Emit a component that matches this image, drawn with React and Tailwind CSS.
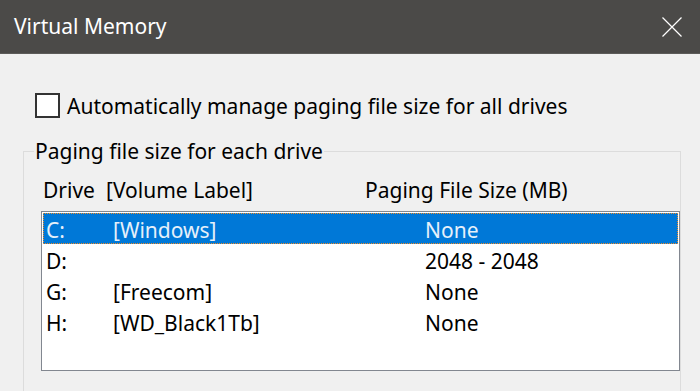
import React from 'react';

const drives = [
    { letter: 'C:', label: '[Windows]', size: 'None', selected: true },
    { letter: 'D:', label: '', size: '2048 - 2048' },
    { letter: 'G:', label: '[Freecom]', size: 'None' },
    { letter: 'H:', label: '[WD_Black1Tb]', size: 'None' },
];

export default function App() {
    return (
        <div
            className="w-[700px] h-[391px] overflow-hidden bg-[#f0f0f0] text-[#000]"
            style={{ fontFamily: '"Noto Sans", "Open Sans", sans-serif' }}
        >
            {/* Title bar */}
            <div className="h-[54px] bg-[#4b4a48] border-b border-[#5c5b59] flex items-center justify-between pl-[14px] pr-[18px]">
                <span className="text-white text-[21px]">Virtual Memory</span>
                <svg width="20" height="20" viewBox="0 0 20 20" className="mt-[1px]">
                    <path d="M0.5 0.5 L19.5 19.5 M19.5 0.5 L0.5 19.5" stroke="#ffffff" strokeWidth="1.2" fill="none" />
                </svg>
            </div>

            <div className="pl-[23px] pr-[19px] pt-[38px]">
                {/* Auto manage checkbox */}
                <label className="flex items-center gap-[7px] ml-[12px]">
                    <span className="w-[25px] h-[25px] border-2 border-[#333333] bg-white shrink-0" />
                    <span className="text-[21px] leading-[25px] mt-[2px]">Automatically manage paging file size for all drives</span>
                </label>

                {/* Group box */}
                <fieldset className="mt-[18px] border border-[#dcdcdc] pl-[10px] pr-0 pb-[30px] h-[300px]">
                    <legend className="px-[1px] text-[21px] leading-[28px]">Paging file size for each drive</legend>

                    <div className="flex text-[21px] leading-[26px] mt-[12px] pl-[9px]">
                        <span className="w-[63px]">Drive</span>
                        <span className="w-[259px]">[Volume Label]</span>
                        <span>Paging File Size (MB)</span>
                    </div>

                    <div className="mt-[8px] ml-[7px] h-[160px] border border-[#828790] bg-white p-[1px]">
                        {drives.map((d) => (
                            <div
                                key={d.letter}
                                className={`flex items-center h-[31px] text-[21px] leading-[31px] pl-[3px] pt-[3px] ${d.selected
                                    ? 'bg-[#0078d7] text-[#e6f0fa] outline-1 outline-dotted outline-[#f08c28] -outline-offset-1'
                                    : ''
                                    }`}
                            >
                                <span className="w-[67px]">{d.letter}</span>
                                <span className="w-[312px]">{d.label}</span>
                                <span>{d.size}</span>
                            </div>
                        ))}
                    </div>
                </fieldset>
            </div>
        </div>
    );
}
